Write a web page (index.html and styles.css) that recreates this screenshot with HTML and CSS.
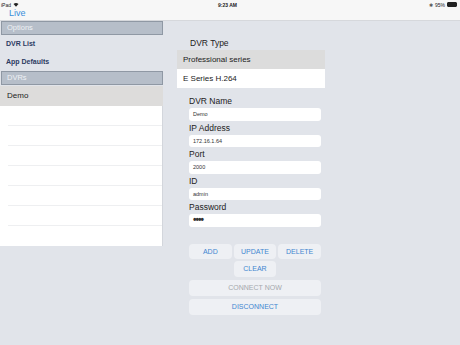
FILE: index.html
```html
<!DOCTYPE html>
<html lang="en">
<head>
  <meta charset="UTF-8">
  <title>Live - DVR Settings</title>
  <link rel="stylesheet" href="styles.css">
</head>
<body>

<div class="topbar">
  <div class="status">
    <div class="status-left">
      <span>iPad</span>
      <svg class="wifi" width="6" height="5" viewBox="0 0 12 10">
        <path d="M6 9.5 L1 4 A7.5 7.5 0 0 1 11 4 Z" fill="#222"/>
      </svg>
    </div>
    <div class="status-time">9:23 AM</div>
    <div class="status-right">
      <span class="bt">&#x2731;</span>
      <span>95%</span>
      <span class="battery"><span class="battery-fill"></span></span>
    </div>
  </div>
  <div class="navbar">
    <span class="back">Live</span>
  </div>
</div>

<div class="main">
  <div class="sidebar">
    <div class="section-head">Options</div>
    <div class="menu-item">DVR List</div>
    <div class="menu-item">App Defaults</div>
    <div class="section-head">DVRs</div>
    <div class="dvr-row selected">Demo</div>
    <div class="dvr-list">
      <div class="dvr-row"></div>
      <div class="dvr-row"></div>
      <div class="dvr-row"></div>
      <div class="dvr-row"></div>
      <div class="dvr-row"></div>
      <div class="dvr-row"></div>
      <div class="dvr-row last"></div>
    </div>
  </div>

  <div class="content">
    <div class="type-label">DVR Type</div>
    <div class="picker">
      <div class="picker-row grey">Professional series</div>
      <div class="picker-row">E Series H.264</div>
    </div>

    <form class="dvr-form">
      <label>DVR Name</label>
      <div class="field">Demo</div>
      <label>IP Address</label>
      <div class="field">172.16.1.64</div>
      <label>Port</label>
      <div class="field">2000</div>
      <label>ID</label>
      <div class="field">admin</div>
      <label>Password</label>
      <div class="field pass">&bull;&bull;&bull;&bull;</div>

      <div class="btn-grid">
        <button type="button">ADD</button>
        <button type="button">UPDATE</button>
        <button type="button">DELETE</button>
        <button type="button" class="mid">CLEAR</button>
      </div>
      <button type="button" class="wide disabled">CONNECT NOW</button>
      <button type="button" class="wide">DISCONNECT</button>
    </form>
  </div>
</div>

</body>
</html>
```

FILE: styles.css
```css
body {
  margin: 0;
  width: 460px;
  height: 345px;
  overflow: hidden;
  font-family: 'Liberation Sans', Arial, sans-serif;
  background-color: #e1e4ea;
  color: #222;
}

.topbar {
  height: 21px;
  background-color: #f7f7f7;
  border-bottom: 1px solid #d6d8dc;
  box-sizing: border-box;
}

.status {
  display: flex;
  justify-content: space-between;
  align-items: center;
  height: 9px;
  padding: 0 2px 0 1px;
  font-size: 5px;
  color: #222;
}

.status-left, .status-right {
  display: flex;
  align-items: center;
  gap: 2px;
  width: 60px;
}

.status-right {
  justify-content: flex-end;
}

.status-time {
  font-weight: bold;
  font-size: 5px;
  margin-left: -4px;
}

.bt {
  font-size: 5px;
  color: #555;
}

.battery {
  display: inline-block;
  width: 8px;
  height: 3px;
  border: 0.5px solid #222;
  border-radius: 1px;
  margin-right: 1px;
}

.battery-fill {
  display: block;
  width: 95%;
  height: 100%;
  background: #222;
}

.navbar {
  height: 11px;
  display: flex;
  align-items: center;
  padding-left: 9px;
}

.back {
  color: #3a8fdb;
  font-size: 9px;
  line-height: 9px;
  margin-top: -3px;
}

.main {
  display: flex;
}

.sidebar {
  width: 163px;
  flex-shrink: 0;
}

.section-head {
  height: 14px;
  box-sizing: border-box;
  background-color: #b6bec9;
  border: 1px solid #8f98a4;
  color: #eef1f5;
  font-size: 7.5px;
  line-height: 12px;
  padding-left: 5px;
  margin-left: 1px;
}

.menu-item {
  height: 18px;
  line-height: 18px;
  padding-left: 6px;
  font-size: 7px;
  font-weight: bold;
  color: #2c3b62;
}

.dvr-row {
  height: 20px;
  box-sizing: border-box;
  line-height: 20px;
  font-size: 8px;
  background-color: #fff;
}

.dvr-row.selected {
  background-color: #dddcdb;
  padding-left: 7px;
  margin-top: 1px;
}

.dvr-list {
  background-color: #fff;
  border-right: 1px solid #d3d6dc;
}

.dvr-list .dvr-row {
  border-bottom: 1px solid #eeeff1;
  margin-left: 8px;
}

.dvr-list .dvr-row.last {
  border-bottom: none;
}

.content {
  flex: 1;
  padding: 17px 0 0 14px;
}

.type-label {
  font-size: 8.5px;
  line-height: 11px;
  padding-left: 13px;
  margin-bottom: 1px;
}

.picker {
  width: 148px;
}

.picker-row {
  height: 19px;
  line-height: 19px;
  background-color: #fff;
  font-size: 8px;
  padding-left: 6px;
}

.picker-row.grey {
  background-color: #dcdcdc;
}

.dvr-form {
  width: 132px;
  margin: 6px 0 0 12px;
}

.dvr-form label {
  display: block;
  font-size: 8.5px;
  line-height: 14px;
}

.field {
  height: 12.5px;
  line-height: 12.5px;
  background-color: #fff;
  border-radius: 3px;
  font-size: 5.5px;
  padding-left: 4px;
  color: #333;
}

.field.pass {
  font-size: 10px;
  font-weight: bold;
  letter-spacing: -1px;
}

.btn-grid {
  display: grid;
  grid-template-columns: repeat(3, 1fr);
  gap: 2px;
  margin-top: 17px;
}

button {
  height: 15.5px;
  background-color: #eef0f4;
  border: none;
  border-radius: 4px;
  color: #3f86d0;
  font-family: 'Liberation Sans', Arial, sans-serif;
  font-size: 7px;
  padding: 0;
  cursor: pointer;
}

button.mid {
  grid-column: 2;
}

button.wide {
  display: block;
  width: 100%;
  margin-top: 3.5px;
}

button.disabled {
  color: #a5a8ad;
}
```
